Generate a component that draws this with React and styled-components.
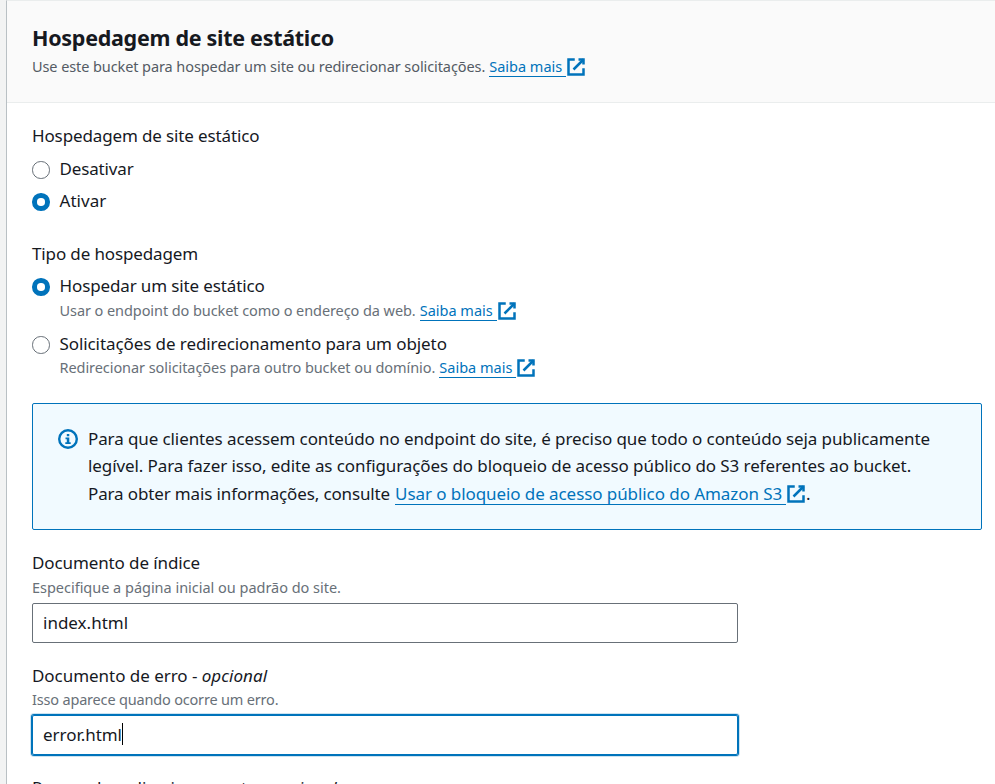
import React from "react";
import styled, { createGlobalStyle, css } from "styled-components";

const GlobalStyle = createGlobalStyle`
  *, *::before, *::after { box-sizing: border-box; }
  body {
    margin: 0;
    overflow: hidden;
    background: #f2f3f3;
    color: #16191f;
    font-family: "Noto Sans", "Open Sans", sans-serif;
    font-size: 17px;
  }
`;

const Page = styled.div`
  display: flex;
  height: 784px;
  padding-left: 6px;
  overflow: hidden;
`;

const Panel = styled.section`
  flex: 1;
  min-width: 0;
  border-left: 1px solid #b9c0c4;
  border-top: 1px solid #eaeded;
  background: #fff;
`;

const Header = styled.header`
  height: 102px;
  padding: 23px 25px 0;
  background: #fafafa;
  border-bottom: 1px solid #eaeded;
`;

const tracked = css`
  letter-spacing: ${({ $track = 0 }) => $track}px;
`;

const Title = styled.h2`
  margin: 0;
  font-size: 21.5px;
  line-height: 28px;
  font-weight: 700;
  white-space: nowrap;
  ${tracked}
`;

const Hint = styled.div`
  display: flex;
  height: 20px;
  margin-top: ${({ $top = 0 }) => $top}px;
  font-size: 14.5px;
  line-height: 20px;
  color: ${({ $dark }) => ($dark ? "#545b64" : "#687078")};
  white-space: pre;
`;

const Run = styled.span`
  ${tracked}
  margin-right: ${({ $after = 0 }) => $after}px;
`;

const Content = styled.div`
  padding: 19px 13px 0 25px;
`;

const Field = styled.div`
  margin-bottom: ${({ $bottom = 0 }) => $bottom}px;
`;

const Label = styled.div`
  line-height: 28px;
  white-space: pre;
  ${tracked}
`;

const Optional = styled.em`
  letter-spacing: 0.05px;
`;

const Options = styled.div`
  display: grid;
  gap: ${({ $gap }) => $gap}px;
  margin-top: ${({ $top }) => $top}px;
`;

const Option = styled.label`
  display: grid;
  grid-template-columns: 17.5px 1fr;
  column-gap: 10px;
`;

const Radio = styled.span`
  width: 17.5px;
  height: 17.5px;
  margin-top: 6px;
  border-radius: 50%;
  background: #fff;
  border: ${({ $on }) => ($on ? "5.5px solid #0073bb" : "1.2px solid #687078")};
`;

const Link = styled.a`
  display: inline-flex;
  align-items: flex-start;
  align-self: flex-start;
  color: #0073bb;
  text-decoration: none;
  white-space: nowrap;
`;

const LinkText = styled.span`
  ${tracked}
  padding: 0 4px 1px 0;
  background: linear-gradient(#0073bb, #0073bb) 0 ${({ $line }) => $line}px / 100% 1px no-repeat;
`;

const ExternalSvg = styled.svg`
  flex: none;
  display: block;
  width: 20px;
  height: 20px;
  margin-top: ${({ $top }) => $top}px;
  fill: none;
  stroke: #0073bb;
  stroke-width: 2;
`;

const Alert = styled.div`
  display: flex;
  height: 127px;
  margin-top: 26px;
  padding: 20.6px 25px;
  border: 1px solid #0073bb;
  border-radius: 2px;
  background: #f1faff;
`;

const InfoSvg = styled.svg`
  flex: none;
  width: 20px;
  height: 20px;
  margin: 4.4px 10px 0 0;
`;

const AlertText = styled.div`
  line-height: 27.5px;
  white-space: pre;
`;

const AlertLine = styled.div`
  display: flex;
  height: 27.5px;
  ${tracked}
`;

const TextBox = styled.div`
  display: flex;
  align-items: center;
  width: 706px;
  height: 40px;
  margin-top: 6px;
  padding: 0 10px 2px;
  border: 1px solid ${({ $focus }) => ($focus ? "#0073bb" : "#687078")};
  border-radius: 2px;
  box-shadow: ${({ $focus }) => ($focus ? "0 0 0 1px #0073bb, 0 0 0 2px rgba(0, 115, 187, .2)" : "none")};
  ${tracked}
`;

const Caret = styled.span`
  width: 1px;
  height: 22px;
  background: #000;
`;

function ExternalLink({ children, track, iconTop = 1, line = 20 }) {
  return (
    <Link>
      <LinkText $track={track} $line={line}>{children}</LinkText>
      <ExternalSvg viewBox="0 0 16 16" $top={iconTop}>
        <path d="M10 2h4v4" />
        <path d="m6 10 8-8" />
        <path d="M14 9.05V14H2V2h5" />
      </ExternalSvg>
    </Link>
  );
}

export default function App() {
  return (
    <>
      <GlobalStyle />
      <Page>
        <Panel>
          <Header>
            <Title $track={-0.285}>Hospedagem de site estático</Title>
            <Hint $top={4} $dark>
              <Run $track={-0.09} $after={4}>Use este bucket para hospedar um site ou redirecionar solicitações.</Run>
              <ExternalLink>Saiba mais</ExternalLink>
            </Hint>
          </Header>
          <Content>
            <Field $bottom={25}>
              <Label $track={-0.13}>Hospedagem de site estático</Label>
              <Options $top={5} $gap={4}>
                <Option>
                  <Radio />
                  <Label $track={-0.15}>Desativar</Label>
                </Option>
                <Option>
                  <Radio $on />
                  <Label $track={0.05}>Ativar</Label>
                </Option>
              </Options>
            </Field>
            <Field>
              <Label $track={-0.13}>Tipo de hospedagem</Label>
              <Options $top={4} $gap={10}>
                <Option>
                  <Radio $on />
                  <div>
                    <Label $track={-0.126}>Hospedar um site estático</Label>
                    <Hint>
                      <Run $track={-0.075} $after={4}>Usar o endpoint do bucket como o endereço da web.</Run>
                      <ExternalLink>Saiba mais</ExternalLink>
                    </Hint>
                  </div>
                </Option>
                <Option>
                  <Radio />
                  <div>
                    <Label $track={-0.085}>Solicitações de redirecionamento para um objeto</Label>
                    <Hint $top={-1}>
                      <Run $track={-0.066} $after={4}>Redirecionar solicitações para outro bucket ou domínio.</Run>
                      <ExternalLink>Saiba mais</ExternalLink>
                    </Hint>
                  </div>
                </Option>
              </Options>
            </Field>
            <Alert>
              <InfoSvg viewBox="0 0 20 20">
                <circle cx="10" cy="10" r="8.8" fill="none" stroke="#0073bb" strokeWidth="2.4" />
                <path d="M8.8 5h2.5v2.2H8.8zM7.5 8.5h3.8v4.7h1.4V15H7.3v-1.8h1.5v-3H7.5z" fill="#0073bb" />
              </InfoSvg>
              <AlertText>
                <AlertLine $track={-0.1}>Para que clientes acessem conteúdo no endpoint do site, é preciso que todo o conteúdo seja publicamente</AlertLine>
                <AlertLine $track={-0.09}>legível. Para fazer isso, edite as configurações do bloqueio de acesso público do S3 referentes ao bucket.</AlertLine>
                <AlertLine>
                  <Run $track={-0.137} $after={5}>Para obter mais informações, consulte</Run>
                  <ExternalLink track={-0.076} iconTop={4.4} line={24}>Usar o bloqueio de acesso público do Amazon S3</ExternalLink>.
                </AlertLine>
              </AlertText>
            </Alert>
            <Field $bottom={19}>
              <Options $top={19} $gap={0}>
                <Label $track={-0.11}>Documento de índice</Label>
                <Hint><Run $track={-0.02}>Especifique a página inicial ou padrão do site.</Run></Hint>
              </Options>
              <TextBox>index.html</TextBox>
            </Field>
            <Field $bottom={19}>
              <Label $track={-0.04}>Documento de erro - <Optional>opcional</Optional></Label>
              <Hint $top={-1}><Run $track={-0.18}>Isso aparece quando ocorre um erro.</Run></Hint>
              <TextBox $focus $track={-0.04}>error.html<Caret /></TextBox>
            </Field>
            <Label $track={-0.05}>Regras de redirecionamento - <Optional>opcional</Optional></Label>
          </Content>
        </Panel>
      </Page>
    </>
  );
}
